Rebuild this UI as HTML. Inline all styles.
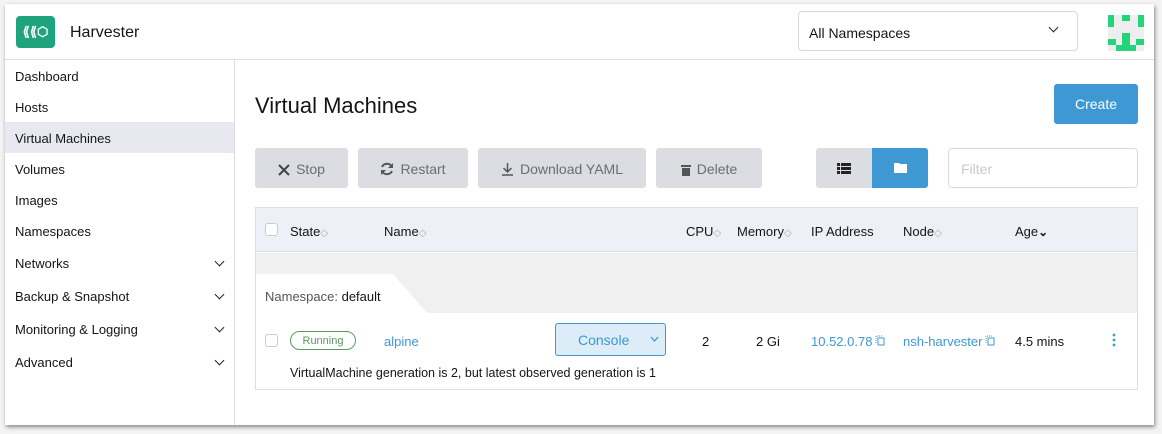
<!DOCTYPE html>
<html><head><style>
*{box-sizing:border-box;margin:0;padding:0}
body{width:1162px;height:434px;background:#f4f4f4;font-family:"Liberation Sans",sans-serif;color:#141419;position:relative;overflow:hidden}
.card{position:absolute;left:5px;top:4px;width:1149px;height:421px;background:#fff;box-shadow:1px 2px 4px rgba(0,0,0,.45);overflow:hidden}
.a{position:absolute}
.side div{position:absolute;left:10px;font-size:13px}
.chev{position:absolute;left:211px;width:7px;height:7px;border-right:1.6px solid #222;border-bottom:1.6px solid #222;transform:rotate(45deg)}
.btn{position:absolute;top:144px;height:40px;background:#dcdde3;border-radius:3px;color:#6c6c76;font-size:14px;line-height:42px;text-align:center}
.btn svg{vertical-align:-2px;margin-right:6px}
.th{position:absolute;top:220px;font-size:13px}
.s{color:#aaa;font-size:10px}
.blue{color:#3d98d3}
</style></head><body>
<div class="card">
 <div class="a" style="left:11px;top:12px;width:39px;height:32px;background:#1fa37f;border-radius:4px;color:#fff;font-size:13px;line-height:32px;text-align:center;font-weight:bold">⟪⟪⬡</div>
 <div class="a" style="left:65px;top:20px;font-size:16px">Harvester</div>
 <div class="a" style="left:793px;top:7px;width:280px;height:40px;border:1px solid #d8d8de;border-radius:4px"></div>
 <div class="a" style="left:804px;top:21px;font-size:14px">All Namespaces</div>
 <div class="a" style="left:1045px;top:20px;width:7px;height:7px;border-right:1.6px solid #222;border-bottom:1.6px solid #222;transform:rotate(45deg)"></div>
 <svg class="a" style="left:1103px;top:11px" width="36" height="36"><rect width="36" height="36" fill="#eee"/><g fill="#22d57a"><rect x="0" y="0" width="6" height="12"/><rect x="30" y="0" width="6" height="12"/><rect x="14" y="0" width="8" height="6"/><rect x="14" y="18" width="8" height="12"/><rect x="0" y="24" width="8" height="6"/><rect x="28" y="24" width="8" height="6"/><rect x="8" y="30" width="20" height="6"/></g></svg>
 <div class="a" style="left:0;top:55px;width:1149px;height:1px;background:#dcdce2"></div>
 <div class="a" style="left:229px;top:56px;width:1px;height:370px;background:#dcdce2"></div>
 <div class="a" style="left:0;top:118px;width:229px;height:31px;background:#e8e8f0"></div>
 <div class="side">
  <div style="top:65px">Dashboard</div><div style="top:96px">Hosts</div><div style="top:127px">Virtual Machines</div>
  <div style="top:158px">Volumes</div><div style="top:189px">Images</div><div style="top:220px">Namespaces</div>
  <div style="top:252px">Networks</div><div style="top:285px">Backup &amp; Snapshot</div><div style="top:318px">Monitoring &amp; Logging</div><div style="top:351px">Advanced</div>
 </div>
 <div class="chev" style="top:254px"></div><div class="chev" style="top:287px"></div><div class="chev" style="top:320px"></div><div class="chev" style="top:353px"></div>
 <div class="a" style="left:250px;top:89px;font-size:22px">Virtual Machines</div>
 <div class="a" style="left:1049px;top:80px;width:84px;height:40px;background:#3d98d3;border-radius:3px;color:#fff;font-size:14px;line-height:41px;text-align:center">Create</div>
 <div class="btn" style="left:250px;width:93px"><svg width="12" height="12"><path d="M1 1L11 11M11 1L1 11" stroke="#444" stroke-width="2"/></svg>Stop</div>
 <div class="btn" style="left:353px;width:110px"><svg width="14" height="14" viewBox="0 0 14 14"><path d="M12 5A5.5 5.5 0 0 0 2 5M2 9A5.5 5.5 0 0 0 12 9" stroke="#555" stroke-width="2" fill="none"/><path d="M13 1V6H8Z M1 13V8H6Z" fill="#555"/></svg>Restart</div>
 <div class="btn" style="left:473px;width:168px"><svg width="13" height="14"><path d="M6.5 1V10M2.5 6L6.5 10L10.5 6M1 13H12" stroke="#555" stroke-width="1.5" fill="none"/></svg>Download YAML</div>
 <div class="btn" style="left:651px;width:106px"><svg width="10" height="12"><rect x="0" y="1" width="10" height="2" fill="#555"/><rect x="1" y="4" width="8" height="8" fill="#555"/></svg>Delete</div>
 <div class="a" style="left:811px;top:144px;width:56px;height:40px;background:#dcdde3;border-radius:3px 0 0 3px"><svg class="a" style="left:21px;top:15px" width="14" height="11"><g fill="#222"><rect y="0" width="3" height="3"/><rect y="4" width="3" height="3"/><rect y="8" width="3" height="3"/><rect x="4" y="0" width="10" height="3"/><rect x="4" y="4" width="10" height="3"/><rect x="4" y="8" width="10" height="3"/></g></svg></div>
 <div class="a" style="left:867px;top:144px;width:56px;height:40px;background:#3d98d3;border-radius:0 3px 3px 0"><svg class="a" style="left:22px;top:14px" width="13" height="11"><path d="M0 1H5L6 2H13V11H0Z" fill="#fff"/></svg></div>
 <div class="a" style="left:943px;top:144px;width:190px;height:40px;border:1px solid #d8d8de;border-radius:4px;color:#c8c8d0;font-size:14px;line-height:40px;padding-left:12px">Filter</div>
 <div class="a" style="left:250px;top:203px;width:883px;height:183px;border:1px solid #dcdce2"></div>
 <div class="a" style="left:251px;top:204px;width:881px;height:44px;background:#eef0f7;border-bottom:1px solid #dcdce2"></div>
 <div class="a" style="left:260px;top:219px;width:13px;height:13px;border:1px solid #ccc;border-radius:3px;background:#fff"></div>
 <div class="th" style="left:285px">State<span class="s">◇</span></div>
 <div class="th" style="left:379px">Name<span class="s">◇</span></div>
 <div class="th" style="left:681px">CPU<span class="s">◇</span></div>
 <div class="th" style="left:732px">Memory<span class="s">◇</span></div>
 <div class="th" style="left:806px">IP Address</div>
 <div class="th" style="left:898px">Node<span class="s">◇</span></div>
 <div class="th" style="left:1010px">Age<span style="font-size:12px;font-weight:bold">⌄</span></div>
 <div class="a" style="left:251px;top:249px;width:881px;height:60px;background:#f0f0f0"></div>
 <svg class="a" style="left:251px;top:270px" width="180" height="40"><path d="M0 0H137L172 40H0Z" fill="#fff"/></svg>
 <div class="a" style="left:260px;top:285px;font-size:13px"><span style="color:#555">Namespace:</span> default</div>
 <div class="a" style="left:260px;top:330px;width:13px;height:13px;border:1px solid #ccc;border-radius:3px"></div>
 <div class="a" style="left:285px;top:327px;width:66px;height:19px;border:1px solid #5d995d;border-radius:10px;color:#5d995d;font-size:11px;text-align:center;line-height:18px">Running</div>
 <div class="a blue" style="left:379px;top:330px;font-size:13px">alpine</div>
 <div class="a" style="left:550px;top:319px;width:111px;height:33px;background:#dcedf8;border:1px solid #3d98d3;border-radius:3px;color:#3d98d3;font-size:14px;line-height:33px;padding-left:22px">Console<svg style="position:absolute;right:6px;top:12px" width="9" height="6"><path d="M1 1L4.5 5L8 1" stroke="#3d98d3" stroke-width="1.3" fill="none"/></svg></div>
 <div class="a" style="left:697px;top:330px;font-size:13px">2</div>
 <div class="a" style="left:751px;top:330px;font-size:13px">2 Gi</div>
 <div class="a blue" style="left:806px;top:330px;font-size:13px">10.52.0.78<svg style="margin-left:3px;vertical-align:0" width="10" height="11"><rect x="3" y="3" width="6" height="7" stroke="#3d98d3" fill="none"/><path d="M1 8V1H7" stroke="#3d98d3" stroke-dasharray="1 1" fill="none"/></svg></div>
 <div class="a blue" style="left:898px;top:330px;font-size:13px">nsh-harvester<svg style="margin-left:3px;vertical-align:0" width="10" height="11"><rect x="3" y="3" width="6" height="7" stroke="#3d98d3" fill="none"/><path d="M1 8V1H7" stroke="#3d98d3" stroke-dasharray="1 1" fill="none"/></svg></div>
 <div class="a" style="left:1010px;top:330px;font-size:13px">4.5 mins</div>
 <svg class="a" style="left:1107px;top:329px" width="4" height="14"><g fill="#3d98d3"><circle cx="2" cy="2" r="1.4"/><circle cx="2" cy="7" r="1.4"/><circle cx="2" cy="12" r="1.4"/></g></svg>
 <div class="a" style="left:285px;top:362px;font-size:12.5px">VirtualMachine generation is 2, but latest observed generation is 1</div>
</div>
</body></html>
